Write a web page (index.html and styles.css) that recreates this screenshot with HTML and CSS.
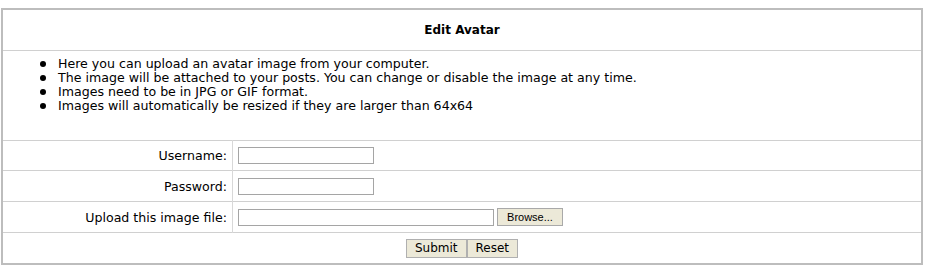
FILE: index.html
```html
<!DOCTYPE html>
<html lang="en">
<head>
    <meta charset="UTF-8">
    <title>Edit Avatar</title>
    <link rel="stylesheet" href="styles.css">
</head>
<body>
    <form class="avatar-form" action="#" method="post">
        <table class="forum-table">
            <tr>
                <th colspan="2" class="head">Edit Avatar</th>
            </tr>
            <tr>
                <td colspan="2" class="info">
                    <ul class="rules">
                        <li>Here you can upload an avatar image from your computer.</li>
                        <li>The image will be attached to your posts. You can change or disable the image at any time.</li>
                        <li>Images need to be in JPG or GIF format.</li>
                        <li>Images will automatically be resized if they are larger than 64x64</li>
                    </ul>
                </td>
            </tr>
            <tr class="first">
                <td class="label">Username:</td>
                <td class="field"><input type="text" class="text-input short"></td>
            </tr>
            <tr>
                <td class="label">Password:</td>
                <td class="field"><input type="password" class="text-input short"></td>
            </tr>
            <tr>
                <td class="label">Upload this image file:</td>
                <td class="field">
                    <span class="file-box">
                        <input type="text" class="text-input long">
                        <button type="button" class="browse">Browse...</button>
                    </span>
                </td>
            </tr>
            <tr>
                <td colspan="2" class="actions">
                    <button type="submit" class="btn">Submit</button><button type="reset" class="btn">Reset</button>
                </td>
            </tr>
        </table>
    </form>
</body>
</html>
```

FILE: styles.css
```css
body {
    margin: 8px 6px 0 1px;
    background: #ffffff;
    font-family: "DejaVu Sans", Verdana, sans-serif;
    font-size: 12.6px;
    color: #000000;
}
.forum-table {
    width: 100%;
    border-collapse: collapse;
    border: 2px solid #bdbdbd;
}
.forum-table td, .forum-table th {
    border-top: 1px solid #d0d0d0;
    padding: 0;
}
.head {
    height: 40px;
    text-align: center;
    font-weight: bold;
    font-size: 12px;
}
.info {
    height: 89px;
    vertical-align: top;
}
.rules {
    list-style: none;
    margin: 6px 0 0 0;
    padding: 0 0 0 37px;
}
.rules li {
    display: flex;
    align-items: center;
    line-height: 14px;
}
.rules li::before {
    content: "";
    width: 6px;
    height: 6px;
    border-radius: 50%;
    background: #000000;
    margin-right: 12px;
    flex: none;
}
.label {
    width: 224px;
    height: 30px;
    padding-right: 5px !important;
    text-align: right;
    border-right: 1px solid #d8d8d8;
}
.first .label {
    height: 29px;
}
.field {
    padding-left: 5px !important;
}
.text-input {
    box-sizing: border-box;
    height: 17px;
    border: 1px solid #a5a5a5;
    padding: 0 2px;
    margin: 0;
    vertical-align: middle;
    font-family: inherit;
    font-size: 12px;
}
.short {
    width: 136px;
}
.long {
    width: 256px;
}
.file-box {
    display: inline-flex;
    align-items: center;
    gap: 3px;
}
.browse {
    box-sizing: border-box;
    width: 66px;
    height: 18px;
    padding: 0;
    background: #ece9d8;
    border: 1px solid #a9a9a9;
    font-family: "Liberation Sans", Arial, sans-serif;
    font-size: 11px;
    color: #000000;
}
.actions {
    height: 30px;
    text-align: center;
}
.btn {
    box-sizing: border-box;
    height: 19px;
    margin: 0;
    padding: 0 8px;
    background: #ece9d8;
    border: 1px solid #b0b0b0;
    font-family: inherit;
    font-size: 12px;
    color: #000000;
    vertical-align: middle;
}
```
